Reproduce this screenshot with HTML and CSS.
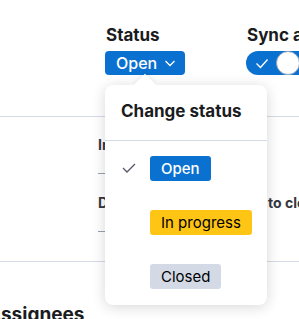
FILE: index.html
```html
<!DOCTYPE html>
<html lang="en">
  <head>
    <meta charset="UTF-8" />
    <meta name="viewport" content="width=device-width, initial-scale=1.0" />
    <title>Case status</title>
    <link rel="stylesheet" href="styles.css">
  </head>
  <body>
    <div class="page">
      <div class="top">
        <div class="group">
          <div class="label">Status</div>
          <button class="statusBtn">
            Open
            <svg width="12" height="12" viewBox="0 0 12 12"><path d="M1.5 4l4.5 4.5 4.5-4.5" fill="none" stroke="#fff" stroke-width="1.3"/></svg>
          </button>
        </div>
        <div class="vline"></div>
        <div class="group">
          <div class="label">Sync alerts</div>
          <div class="toggle">
            <svg width="16" height="16" viewBox="0 0 16 16"><path d="M2.5 8.5l4 4 7-8" fill="none" stroke="#fff" stroke-width="1.4"/></svg>
            <span class="knob"></span>
          </div>
        </div>
      </div>

      <div class="rule"></div>

      <div class="body">
        <div class="row">
          <div class="rowTitle">Incident</div>
          <div class="short"></div>
        </div>
        <div class="row">
          <div class="rowTitle split"><span class="left">Description</span><span>to close</span></div>
          <div class="short"></div>
        </div>
      </div>

      <div class="rule second"></div>

      <div class="assignees">Assignees</div>

      <div class="popover">
        <div class="arrow"></div>
        <div class="popTitle">Change status</div>
        <div class="option">
          <svg class="check" width="16" height="16" viewBox="0 0 16 16"><path d="M1.5 8l4 4 8-8" fill="none" stroke="#535966" stroke-width="1.3"/></svg>
          <span class="badge blue">Open</span>
        </div>
        <div class="option">
          <span class="check"></span>
          <span class="badge yellow">In progress</span>
        </div>
        <div class="option">
          <span class="check"></span>
          <span class="badge gray">Closed</span>
        </div>
      </div>
    </div>
  </body>
</html>
```

FILE: styles.css
```css
body {
  margin: 0;
  font-family: Inter, "Noto Sans", sans-serif;
  color: #1a1c21;
  background: #fff;
  overflow: hidden;
}

.page {
  position: relative;
  width: 299px;
  height: 319px;
  overflow: hidden;
}

.top {
  display: flex;
  padding: 23px 0 0 105px;
  height: 53px;
}
.group {
  display: flex;
  flex-direction: column;
  gap: 3px;
  white-space: nowrap;
}
.label {
  font-size: 17px;
  font-weight: 700;
  line-height: 25px;
  padding-left: 1px;
}
.statusBtn {
  display: flex;
  align-items: center;
  gap: 7px;
  width: 80px;
  height: 24px;
  padding: 0 0 0 11px;
  border: none;
  border-radius: 4px;
  background: #0b71d0;
  color: #fff;
  font-family: inherit;
  font-size: 16px;
  font-weight: 500;
}
.vline {
  width: 1px;
  background: #d3dae6;
  margin: 0 30px 0 31px;
}
.toggle {
  display: flex;
  align-items: center;
  width: 60px;
  height: 24px;
  border-radius: 12px;
  background: #0b71d0;
  padding-left: 8px;
  gap: 6px;
}
.knob {
  width: 22px;
  height: 22px;
  border-radius: 50%;
  background: #fff;
  border: 1px solid #98a2b3;
}

.rule {
  height: 1px;
  background: #d3dae6;
  margin-top: 40px;
}
.rule.second {
  margin-top: 8px;
}

.body {
  padding: 20px 0 0 98px;
}
.row {
  height: 58px;
}
.rowTitle {
  font-size: 14px;
  font-weight: 700;
  line-height: 16px;
  color: #343741;
  white-space: nowrap;
}
.split {
  display: flex;
}
.left {
  width: 170px;
  flex-shrink: 0;
}
.short {
  width: 40px;
  height: 1px;
  background: #98a2b3;
  margin-top: 20px;
}

.assignees {
  font-size: 19px;
  font-weight: 700;
  line-height: 25px;
  margin: 40px 0 0 -13px;
}

.popover {
  position: absolute;
  left: 105px;
  top: 85px;
  width: 162px;
  height: 220px;
  background: #fff;
  border-radius: 8px;
  box-shadow: 0 2px 14px rgba(0, 0, 0, 0.16);
}
.arrow {
  position: absolute;
  left: 32px;
  top: -8px;
  width: 16px;
  height: 16px;
  background: #fff;
  transform: rotate(45deg);
  box-shadow: -2px -2px 4px rgba(0, 0, 0, 0.05);
}
.popTitle {
  position: relative;
  font-size: 17px;
  font-weight: 700;
  line-height: 22px;
  padding: 15px 16px 18px;
  border-bottom: 1px solid #d3dae6;
}
.option {
  display: flex;
  align-items: center;
  gap: 12px;
  padding-left: 16px;
  height: 54px;
}
.option:first-of-type {
  margin-top: 2px;
}
.check {
  width: 17px;
  height: 16px;
}
.badge {
  font-size: 15px;
  line-height: 25px;
  padding: 0 11px;
  border-radius: 3px;
}
.blue {
  background: #0b71d0;
  color: #fff;
  font-weight: 500;
}
.yellow {
  background: #fec514;
  color: #000;
}
.gray {
  background: #d3dae6;
  color: #000;
}
```
